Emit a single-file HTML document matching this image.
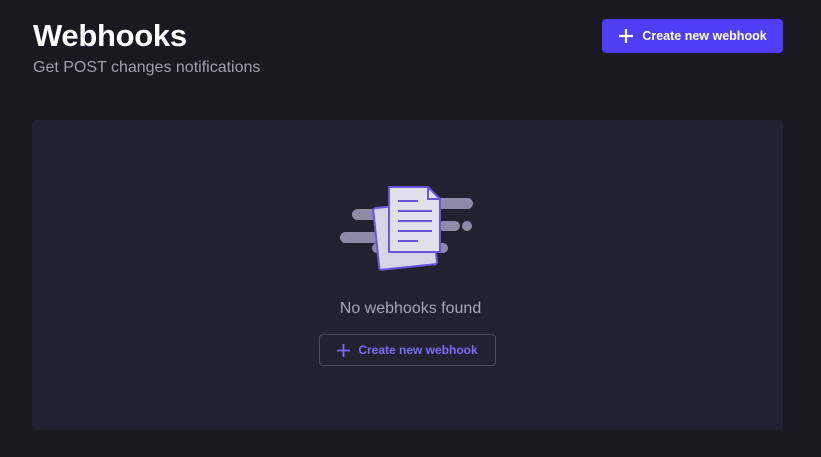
<!DOCTYPE html>
<html><head><style>
body{margin:0;width:821px;height:457px;background:#1a1921;font-family:"Liberation Sans",sans-serif;position:relative;overflow:hidden}
h1{position:absolute;left:33px;top:18px;margin:0;font-size:31px;font-weight:bold;color:#fff;letter-spacing:-0.3px}
.sub{position:absolute;left:33px;top:59px;font-size:16px;color:#a09fae}
.btn{position:absolute;left:602px;top:19px;width:181px;height:34px;background:#4f3ef5;border-radius:4px;color:#fff;font-size:12.5px;font-weight:bold;display:flex;align-items:center;justify-content:center;gap:8px}
.card{position:absolute;left:32px;top:120px;width:751px;height:310px;background:#212130;border-radius:4px}
.msg{position:absolute;left:0;right:0;top:300px;text-align:center;color:#a6a5b5;font-size:16px}
.b2{position:absolute;left:319px;top:334px;width:175px;height:30px;border:1px solid #4a4958;border-radius:4px;color:#7b6cf6;font-size:12px;font-weight:bold;display:flex;align-items:center;justify-content:center;gap:8px}
</style></head><body>
<h1>Webhooks</h1>
<div class="sub">Get POST changes notifications</div>
<div class="btn"><svg width="16" height="16"><path d="M8 1v14M1 8h14" stroke="#fff" stroke-width="2.2"/></svg>Create new webhook</div>
<div class="card"></div>
<svg style="position:absolute;left:0;top:0" width="821" height="457">
<g fill="#8f8aa8">
<rect x="420" y="198" width="53" height="11" rx="5.5"/>
<rect x="352" y="209" width="40" height="11" rx="5.5"/>
<rect x="340" y="232" width="42" height="11" rx="5.5"/>
<rect x="438" y="221" width="22" height="10" rx="5"/>
<circle cx="467" cy="226" r="5"/>
<rect x="372" y="243" width="76" height="10" rx="5"/>
</g>
<g transform="rotate(-6 406 235)">
<rect x="376" y="205" width="58" height="62" rx="2" fill="#d8d6e6" stroke="#6a55e0" stroke-width="2"/>
</g>
<path d="M389 187h39l12 12v53h-51z" fill="#e2e0ec" stroke="#6a55e0" stroke-width="2" stroke-linejoin="round"/>
<path d="M428 187v12h12" fill="none" stroke="#6a55e0" stroke-width="2"/>
<g stroke="#6a55e0" stroke-width="2">
<path d="M398 201h20M398 211h34M398 221h34M398 231h34M398 241h20"/>
</g>
</svg>
<div class="msg">No webhooks found</div>
<div class="b2"><svg width="13" height="13"><path d="M6.5 0v13M0 6.5h13" stroke="#7b6cf6" stroke-width="1.8"/></svg>Create new webhook</div>
</body></html>
